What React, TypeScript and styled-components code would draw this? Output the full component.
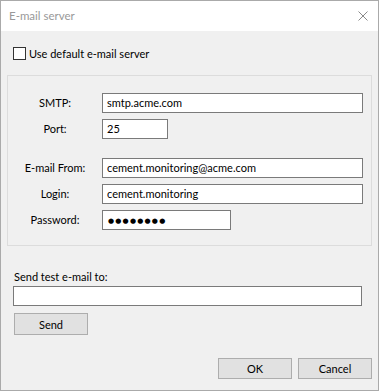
import React from "react";
import styled, { createGlobalStyle } from "styled-components";

const Global = createGlobalStyle`
  html, body { margin: 0; padding: 0; background: #ffffff; }
  body { font-family: "Segoe UI", Lato, "Liberation Sans", sans-serif; font-size: 11px; color: #000; }
`;

const Window = styled.div`
  box-sizing: border-box;
  width: 379px;
  height: 391px;
  border: 1px solid #aaaaaa;
  display: flex;
  flex-direction: column;
  background: #f0f0f0;
`;

const TitleBar = styled.div`
  height: 30px;
  background: #ffffff;
  display: flex;
  align-items: center;
  justify-content: space-between;
  padding: 0 10px 0 8px;
  flex-shrink: 0;
`;

const Title = styled.span`
  color: #999999;
  font-size: 11.5px;
  margin-top: -1px;
`;

const CloseIcon = styled.svg`
  width: 10px;
  height: 10px;
  display: block;
`;

const Body = styled.div`
  flex: 1;
  display: flex;
  flex-direction: column;
  padding: 16px 6px 0 6px;
`;

const CheckRow = styled.label`
  display: flex;
  align-items: center;
  height: 13px;
  padding-left: 6px;
  gap: 3px;
`;

const CheckBox = styled.span`
  box-sizing: border-box;
  width: 13px;
  height: 13px;
  border: 1px solid #333333;
  background: #ffffff;
  flex-shrink: 0;
`;

const Group = styled.div`
  margin-top: 15px;
  box-sizing: border-box;
  width: 365px;
  height: 171px;
  border: 1px solid #dcdcdc;
  padding: 17px 8px 0 0;
  display: flex;
  flex-direction: column;
`;

const FormRow = styled.div<{ $gapTop?: number }>`
  display: grid;
  grid-template-columns: 94px 1fr;
  align-items: center;
  height: 20px;
  margin-top: ${(p) => p.$gapTop ?? 0}px;
`;

const Label = styled.span`
  text-align: center;
  line-height: 20px;
`;

const TextBox = styled.div<{ $width?: number }>`
  box-sizing: border-box;
  height: 20px;
  width: ${(p) => (p.$width ? `${p.$width}px` : "100%")};
  border: 1px solid #7a7a7a;
  background: #ffffff;
  padding: 0 4px;
  line-height: 18px;
  white-space: nowrap;
  overflow: hidden;
`;

const Dots = styled.span`
  font-family: "DejaVu Sans", sans-serif;
  font-size: 7px;
  letter-spacing: 1.2px;
  position: relative;
  top: -1px;
  padding-left: 1px;
`;

const SendLabel = styled.div`
  margin-top: 23px;
  padding-left: 7px;
  line-height: 16px;
`;

const WideBox = styled(TextBox)`
  margin-top: 1px;
  margin-left: 6px;
  width: 349px;
`;

const Button = styled.button`
  box-sizing: border-box;
  width: 74px;
  height: 21px;
  border: 1px solid #adadad;
  background: #e1e1e1;
  font-family: inherit;
  font-size: 11px;
  color: #000;
  padding: 0;
  line-height: 19px;
`;

const SendButton = styled(Button)`
  margin-top: 7px;
  margin-left: 7px;
  height: 22px;
`;

const Footer = styled.div`
  margin-top: 23px;
  display: flex;
  justify-content: flex-end;
  gap: 6px;
  width: 365px;
`;

export default function App() {
  return (
    <>
      <Global />
      <Window>
        <TitleBar>
          <Title>E-mail server</Title>
          <CloseIcon viewBox="0 0 10 10">
            <path d="M0.5 0.5 L9.5 9.5 M9.5 0.5 L0.5 9.5" stroke="#8a8a8a" strokeWidth="1" fill="none" />
          </CloseIcon>
        </TitleBar>
        <Body>
          <CheckRow>
            <CheckBox />
            <span>Use default e-mail server</span>
          </CheckRow>
          <Group>
            <FormRow>
              <Label>SMTP:</Label>
              <TextBox>smtp.acme.com</TextBox>
            </FormRow>
            <FormRow $gapTop={6}>
              <Label>Port:</Label>
              <TextBox $width={66}>25</TextBox>
            </FormRow>
            <FormRow $gapTop={19}>
              <Label>E-mail From:</Label>
              <TextBox>cement.monitoring@acme.com</TextBox>
            </FormRow>
            <FormRow $gapTop={6}>
              <Label>Login:</Label>
              <TextBox>cement.monitoring</TextBox>
            </FormRow>
            <FormRow $gapTop={6}>
              <Label>Password:</Label>
              <TextBox $width={129}>
                <Dots>●●●●●●●●</Dots>
              </TextBox>
            </FormRow>
          </Group>
          <SendLabel>Send test e-mail to:</SendLabel>
          <WideBox />
          <SendButton>Send</SendButton>
          <Footer>
            <Button>OK</Button>
            <Button>Cancel</Button>
          </Footer>
        </Body>
      </Window>
    </>
  );
}
